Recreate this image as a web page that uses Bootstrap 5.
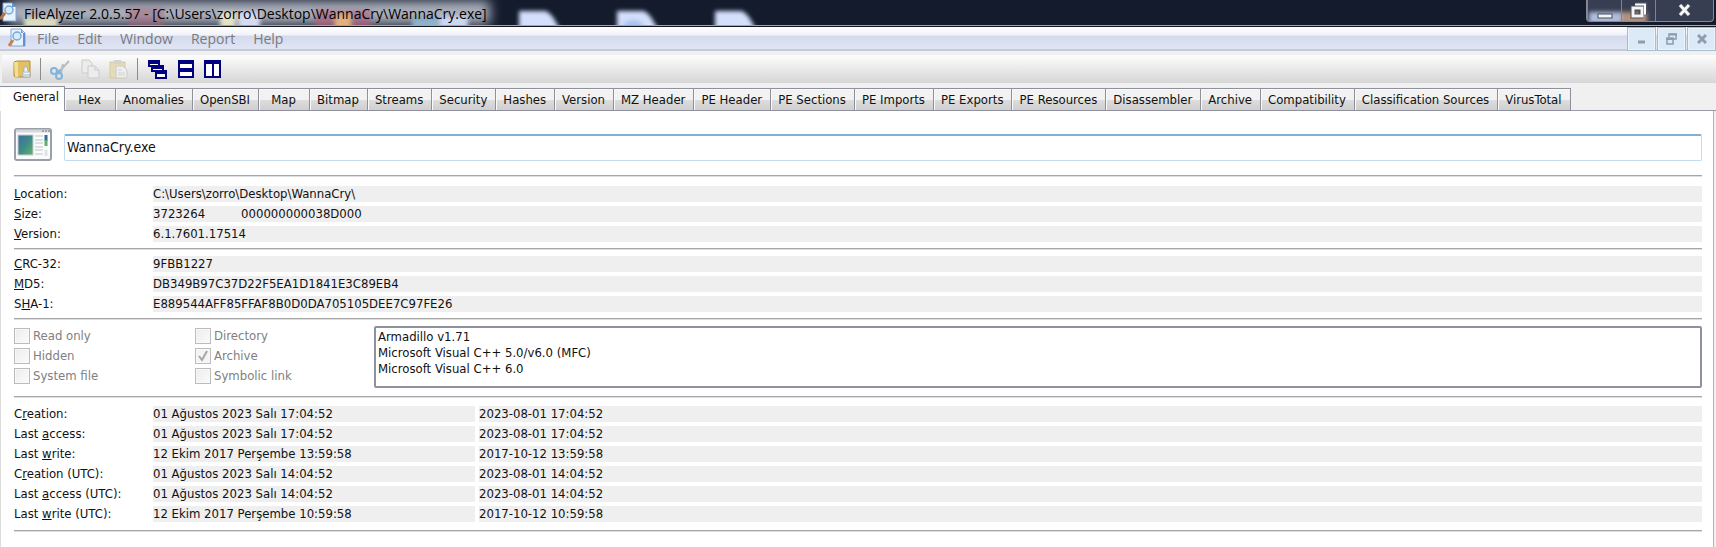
<!DOCTYPE html>
<html lang="en">
<head>
<meta charset="utf-8">
<meta name="viewport" content="width=device-width, initial-scale=1">
<title>FileAlyzer 2.0.5.57</title>
<link rel="stylesheet" href="https://cdn.jsdelivr.net/npm/bootstrap@5.3.0/dist/css/bootstrap.min.css">
<style>
  body { background: #f0f0f0; color: #111; font-family: "DejaVu Sans Condensed", "DejaVu Sans", sans-serif; font-size: 13px; line-height: 16px; }
  svg { display: block; flex: none; }
  button { font: inherit; padding: 0; }

  /* title bar */
  .titlebar { height: 27px; background: #131b2d; border-bottom: 1px solid #14161f; box-shadow: inset 0 -1px #a4a5ad; }
  .glow { top: 0; left: 0; }
  .titletext { font: 14px/20px "Open Sans", sans-serif; color: #000; padding: 4px 0 0 6px; }
  .caption-group { height: 22px; margin-right: 2px; border: 1px solid #85899a; border-top: 0; border-radius: 0 0 4px 4px; background: rgba(150,155,175,.28); }
  .caption-group button { width: 34px; border: 0; border-left: 1px solid #7f8394; background: none; }
  .caption-group button:first-child { border-left: 0; }
  .caption-group .close-app { width: 58px; }
  .caption-group svg, .mdi svg { margin: auto; }

  /* menu bar */
  .menubar { height: 24px; background: linear-gradient(#fff 0, #f0f3f9 8px, #d4daec 9px, #e0e6f4 22px); border-bottom: 2px solid #c6cad8; margin-bottom: 4px; }
  .menubar a { font: 14px/20px "Open Sans", sans-serif; color: #777a82; padding: 2px 9px; text-decoration: none; }
  .mdi { gap: 1px; height: 24px; }
  .mdi button { width: 29px; border: 1px solid #a7bccd; background: #dceaf8; box-shadow: inset 0 0 0 1px #eaf4fc; }

  /* toolbar */
  .toolbar { height: 28px; margin-left: 2px; padding: 3px 0 0 10px; background: linear-gradient(#fdfdfd, #d6d6d6); }
  .toolbar button { border: 0; background: none; width: 20px; height: 22px; }
  .toolbar .divider { width: 1px; height: 22px; background: #8c8c8c; }

  /* tabs */
  .tabstrip { padding-top: 3px; border: 0; box-shadow: inset 0 -1px #9a9ba6; }
  .tabstrip button { min-width: 51px; height: 23px; margin-top: 2px; padding: 0 8px 0 7px; color: #111; white-space: nowrap; border: 1px solid #8f909c; border-left: 0; box-shadow: inset 1px 1px #fafafa; background: linear-gradient(#f2f2f2 50%, #dcdcdc 55%, #cfcfcf); }
  .tabstrip .active { min-width: 65px; height: 25px; margin-top: 0; padding: 0 4px 4px 12px; background: #fff; border-bottom: 0; }

  /* page */
  .sheet { background: #fff; border-left: 1px solid #dcdcdc; border-right: 1px solid #b3b3bb; margin-right: 2px; padding: 17px 11px 15px 13px; }
  .sheet hr { margin: 0; border: 0; opacity: 1; height: 2px; background: linear-gradient(#a6a6a6 50%, #dedede 50%); }
  .headline { margin-bottom: 14px; }
  .filename { height: 27px; font-size: 14px; border: 1px solid #c3dcf0; border-top: 2px solid #7fb0d8; border-radius: 2px; padding: 0 2px 2px; color: #111; background: #fff; }
  .facts { display: grid; grid-template-columns: 139px minmax(0, 1fr); row-gap: 4px; margin: 0; padding: 6px 0; }
  .facts dt { font-weight: 400; white-space: nowrap; }
  .facts dd { margin: 0; background: #efefef; white-space: nowrap; }
  .origin { padding-top: 9px; }
  .dates { grid-template-columns: 139px 322px minmax(0, 1fr); }
  .dates dd + dd { margin-left: 4px; }
  .sizehex { margin-left: 36px; }
  .attributes { padding: 6px 0 8px; }
  .flags { display: grid; grid-template-columns: 181px 179px; row-gap: 4px; align-content: start; padding-top: 2px; color: #808080; }
  .flags label { height: 16px; gap: 3px; }
  .flags input { appearance: none; width: 16px; height: 16px; margin: 0; border: 1px solid #bcbcbc; background: linear-gradient(135deg, #ececec, #fbfbfb); box-shadow: inset 0 0 0 1px #f8f8f8; }
  .flags input:checked { background: #f4f4f4 url("data:image/svg+xml,%3Csvg xmlns='http://www.w3.org/2000/svg' viewBox='0 0 14 14'%3E%3Cpath d='M3 7l3 4 5-9' fill='none' stroke='%23a6a6a6' stroke-width='2'/%3E%3C/svg%3E"); }
  .detected { height: 62px; border: 2px solid #8d929e; color: #111; background: #fff; padding: 1px 0; overflow: hidden; appearance: none; outline: 0; }
  .detected option { padding: 0 2px; min-height: 16px; line-height: 16px; }
</style>
</head>
<body>
<header class="titlebar position-relative d-flex overflow-hidden">
  <svg class="glow position-absolute" width="100%" height="25" aria-hidden="true">
    <defs>
      <filter id="soft" x="-20%" y="-80%" width="140%" height="260%"><feGaussianBlur stdDeviation="2"/></filter>
      <filter id="haze" x="-5%" y="-80%" width="110%" height="260%"><feGaussianBlur stdDeviation="6"/></filter>
    </defs>
    <rect x="8" y="1" width="482" height="23" fill="#d4d8e2" opacity=".8" filter="url(#haze)"/>
    <g filter="url(#soft)">
      <rect x="24" y="17" width="34" height="14" fill="#d9dcc0"/>
      <rect x="128" y="8" width="36" height="24" fill="#a8627a" opacity=".5"/>
      <rect x="220" y="12" width="16" height="20" fill="#e4e2c4"/>
      <rect x="238" y="12" width="22" height="20" fill="#d4dcf4"/>
      <rect x="315" y="10" width="56" height="20" fill="#b0607c" opacity=".65"/>
      <rect x="335" y="14" width="16" height="16" fill="#e0b080"/>
      <rect x="412" y="18" width="28" height="14" fill="#8fb2cc"/>
      <rect x="440" y="16" width="28" height="16" fill="#cad8f2"/>
      <g fill="#d3dffb">
        <path d="M519 11h27q8 4 14 20h-41z"/>
        <path d="M617 11h27q8 4 14 20h-41z"/>
        <path d="M715 11h27q8 4 14 20h-41z"/>
      </g>
      <ellipse cx="633" cy="26" rx="10" ry="6" fill="#a4c2ee"/>
    </g>
  </svg>
  <svg class="position-relative" width="18" height="22" viewBox="0 0 18 22" aria-hidden="true">
    <path d="M3 3h9l4 4v14H3z" fill="#e8f2fd" stroke="#7fa6d8"/><path d="M12 3v4h4z" fill="#5f90d0"/>
    <path d="M0 19l5-6" stroke="#b9713c" stroke-width="3"/><circle cx="9" cy="10" r="4" fill="#d4ecfb" stroke="#7ba7cf" stroke-width="1.5"/>
  </svg>
  <div class="titletext position-relative flex-grow-1 text-nowrap">FileAlyzer 2.0.5.57 - [C:\Users\zorro\Desktop\WannaCry\WannaCry.exe]</div>
  <div class="caption-group position-relative d-flex">
    <svg class="position-absolute bottom-0 start-0" width="80" height="14" aria-hidden="true"><g filter="url(#soft)"><rect x="2" y="5" width="32" height="12" fill="#c4d4f4" opacity=".85"/><rect x="34" y="5" width="26" height="12" fill="#c9a184" opacity=".85"/></g></svg>
    <button type="button" class="position-relative" aria-label="Minimize"><svg width="16" height="20"><rect x="1" y="13" width="14" height="4" fill="#f4f4f4" stroke="#4b4e5c"/></svg></button>
    <button type="button" class="position-relative" aria-label="Restore"><svg width="18" height="20"><g fill="none" stroke="#4b4e5c" stroke-width="5"><path d="M6 3.500h9v10M3 7h8v8H3z"/></g><path d="M5 3.500h10v10" fill="none" stroke="#fff" stroke-width="2"/><path d="M3 7h9v8H3z" fill="none" stroke="#f4f4f4" stroke-width="3"/></svg></button>
    <button type="button" class="close-app" aria-label="Close"><svg width="16" height="20"><path d="M3 4l9 10M12 4l-9 10" stroke="#4b4e5c" stroke-width="5"/><path d="M3 4l9 10M12 4l-9 10" stroke="#f6f6f6" stroke-width="3"/></svg></button>
  </div>
</header>

<nav class="menubar d-flex" aria-label="Menu">
  <svg class="ms-2" width="20" height="22" viewBox="0 0 20 22" aria-hidden="true">
    <path d="M3 2h10l4 4v13H3z" fill="#e8f2fd" stroke="#7fa6d8"/><path d="M13 2v4h4v13h-2V6z" fill="#5f90d0"/>
    <path d="M1 19l4-6" stroke="#c9824a" stroke-width="3"/><circle cx="9" cy="9" r="4" fill="#d4ecfb" stroke="#7ba7cf" stroke-width="1.500"/>
  </svg>
  <a href="#">File</a><a href="#">Edit</a><a href="#">Window</a><a href="#">Report</a><a href="#">Help</a>
  <div class="mdi d-flex ms-auto">
    <button type="button" aria-label="Minimize file"><svg width="9" height="16"><path d="M1 11h7" stroke="#8d9dab" stroke-width="3"/></svg></button>
    <button type="button" aria-label="Restore file"><svg width="11" height="12"><path d="M3 4V1h7v5H8M1 5h6v6H1z" fill="none" stroke="#8d9dab" stroke-width="1.500"/><path d="M3 1.500h8M0 6h8" stroke="#8d9dab" stroke-width="2"/></svg></button>
    <button type="button" aria-label="Close file"><svg width="10" height="10"><path d="M1 1l8 8M9 1L1 9" stroke="#8d9dab" stroke-width="3"/></svg></button>
  </div>
</nav>

<div class="toolbar d-flex" role="toolbar" aria-label="Tools">
  <button type="button" aria-label="Open"><svg width="20" height="22"><path d="M2 4l3-1h13v16H3l-1-1z" fill="#e3c163" stroke="#b08f3a"/><path d="M2 4h4v15H3z" fill="#f5dd94"/><path d="M12 9h3l1 4 2 1v5h-7v-5l1-1z" fill="#f4f7fa" stroke="#a9b3bd"/><path d="M12 14h5M12 17h6" stroke="#9fb4c8"/></svg></button>
  <span class="divider ms-2"></span>
  <button type="button" class="ms-2 me-2" aria-label="Cut"><svg width="22" height="22"><path d="M20 3L9 15M14 6l-2 9" stroke="#b9bcc0" stroke-width="2"/><g fill="none" stroke="#82b4da" stroke-width="2"><circle cx="5" cy="13" r="3"/><circle cx="10" cy="18" r="3"/><path d="M7 14l5-2"/></g></svg></button>
  <button type="button" class="ms-1 me-2" aria-label="Copy"><svg width="20" height="22" fill="#ececec" stroke="#cbcbcb"><path d="M1 2h7l3 3v10H1z"/><path d="M7 8h7l4 4v8H7z"/><path d="M14 8v4h4" fill="none"/></svg></button>
  <button type="button" class="me-1" aria-label="Paste"><svg width="20" height="22"><path d="M1 4h15v16H1z" fill="#e6dbb8" stroke="#d6c99e"/><path d="M5 2h7v4H5z" fill="#d2d2d2"/><path d="M7 8h7l4 4v8H7z" fill="#eee" stroke="#cbcbcb"/><path d="M9 12h4M9 15h7M9 17h7" stroke="#d4d4d4"/></svg></button>
  <span class="divider ms-1"></span>
  <button type="button" class="ms-2 me-2" aria-label="Cascade"><svg width="22" height="22" fill="#fff" stroke="#000080" stroke-width="2"><path d="M3 4h10v4H3z"/><path d="M6 9h11v4H6z"/><path d="M10 14h10v6H10z"/><path d="M2 4h12M5 9h13M9 14h12" stroke-width="4"/></svg></button>
  <button type="button" class="me-2 ps-1" aria-label="Tile horizontally"><svg width="18" height="22" fill="#fff" stroke="#000080" stroke-width="2"><path d="M1 4h14v7H1zM1 12h14v7H1z"/><path d="M0 4h16M0 12h16" stroke-width="4"/></svg></button>
  <button type="button" aria-label="Tile vertically"><svg width="20" height="22" fill="#fff" stroke="#000080" stroke-width="2"><path d="M3 4h8v15H3zM11 4h7v15h-7z"/><path d="M2 4h17" stroke-width="4"/></svg></button>
</div>

<div class="tabstrip d-flex" role="tablist">
  <button type="button" role="tab" class="active" aria-selected="true">General</button>
  <button type="button" role="tab">Hex</button>
  <button type="button" role="tab">Anomalies</button>
  <button type="button" role="tab">OpenSBI</button>
  <button type="button" role="tab">Map</button>
  <button type="button" role="tab">Bitmap</button>
  <button type="button" role="tab">Streams</button>
  <button type="button" role="tab">Security</button>
  <button type="button" role="tab">Hashes</button>
  <button type="button" role="tab">Version</button>
  <button type="button" role="tab">MZ Header</button>
  <button type="button" role="tab">PE Header</button>
  <button type="button" role="tab">PE Sections</button>
  <button type="button" role="tab">PE Imports</button>
  <button type="button" role="tab">PE Exports</button>
  <button type="button" role="tab">PE Resources</button>
  <button type="button" role="tab">Disassembler</button>
  <button type="button" role="tab">Archive</button>
  <button type="button" role="tab">Compatibility</button>
  <button type="button" role="tab">Classification Sources</button>
  <button type="button" role="tab">VirusTotal</button>
</div>

<main class="sheet">
  <div class="headline d-flex align-items-end">
    <svg class="me-2" width="42" height="33" aria-hidden="true">
      <defs><linearGradient id="shot" x2="1" y2="1"><stop stop-color="#3b6fa8"/><stop offset=".5" stop-color="#3f8a86"/><stop offset="1" stop-color="#62b56a"/></linearGradient></defs>
      <rect x="1" y="1" width="36" height="31" rx="2" fill="#fafbfc" stroke="#9ba0a8" stroke-width="2"/>
      <path d="M2 3h34" stroke="#d5d9df" stroke-width="3"/><path d="M28 3h8" stroke="#6c727c" stroke-dasharray="2 1"/>
      <rect x="4" y="7" width="15" height="20" fill="url(#shot)" stroke="#c8ccd2"/>
      <path d="M21 8h8M21 12h8M21 15h8M21 19h8M21 22h8M21 26h8" stroke="#bfc3c8"/>
      <path d="M32 7v6" stroke="#35679f" stroke-width="3"/><path d="M32 12v6" stroke="#5cb065" stroke-width="3"/><path d="M32 22v6" stroke="#e0e3e6" stroke-width="3"/>
    </svg>
    <input class="filename flex-grow-1" type="text" value="WannaCry.exe" aria-label="File name">
  </div>
  <hr>
  <dl class="facts origin">
    <dt><u>L</u>ocation:</dt><dd>C:\Users\zorro\Desktop\WannaCry\</dd>
    <dt><u>S</u>ize:</dt><dd>3723264<span class="sizehex">000000000038D000</span></dd>
    <dt><u>V</u>ersion:</dt><dd>6.1.7601.17514</dd>
  </dl>
  <hr>
  <dl class="facts">
    <dt><u>C</u>RC-32:</dt><dd>9FBB1227</dd>
    <dt><u>M</u>D5:</dt><dd>DB349B97C37D22F5EA1D1841E3C89EB4</dd>
    <dt>S<u>H</u>A-1:</dt><dd>E889544AFF85FFAF8B0D0DA705105DEE7C97FE26</dd>
  </dl>
  <hr>
  <div class="attributes d-flex">
    <div class="flags">
      <label class="d-flex align-items-center"><input type="checkbox" disabled>Read only</label>
      <label class="d-flex align-items-center"><input type="checkbox" disabled>Directory</label>
      <label class="d-flex align-items-center"><input type="checkbox" disabled>Hidden</label>
      <label class="d-flex align-items-center"><input type="checkbox" checked disabled>Archive</label>
      <label class="d-flex align-items-center"><input type="checkbox" disabled>System file</label>
      <label class="d-flex align-items-center"><input type="checkbox" disabled>Symbolic link</label>
    </div>
    <select class="detected flex-grow-1" size="3" aria-label="Detected signatures">
      <option>Armadillo v1.71</option>
      <option>Microsoft Visual C++ 5.0/v6.0 (MFC)</option>
      <option>Microsoft Visual C++ 6.0</option>
    </select>
  </div>
  <hr>
  <dl class="facts dates py-2">
    <dt>C<u>r</u>eation:</dt><dd>01 Ağustos 2023 Salı 17:04:52</dd><dd>2023-08-01 17:04:52</dd>
    <dt>Last <u>a</u>ccess:</dt><dd>01 Ağustos 2023 Salı 17:04:52</dd><dd>2023-08-01 17:04:52</dd>
    <dt>Last <u>w</u>rite:</dt><dd>12 Ekim 2017 Perşembe 13:59:58</dd><dd>2017-10-12 13:59:58</dd>
    <dt>C<u>r</u>eation (UTC):</dt><dd>01 Ağustos 2023 Salı 14:04:52</dd><dd>2023-08-01 14:04:52</dd>
    <dt>Last <u>a</u>ccess (UTC):</dt><dd>01 Ağustos 2023 Salı 14:04:52</dd><dd>2023-08-01 14:04:52</dd>
    <dt>Last <u>w</u>rite (UTC):</dt><dd>12 Ekim 2017 Perşembe 10:59:58</dd><dd>2017-10-12 10:59:58</dd>
  </dl>
  <hr>
</main>
<script src="https://cdn.jsdelivr.net/npm/bootstrap@5.3.0/dist/js/bootstrap.bundle.min.js"></script>
</body>
</html>
